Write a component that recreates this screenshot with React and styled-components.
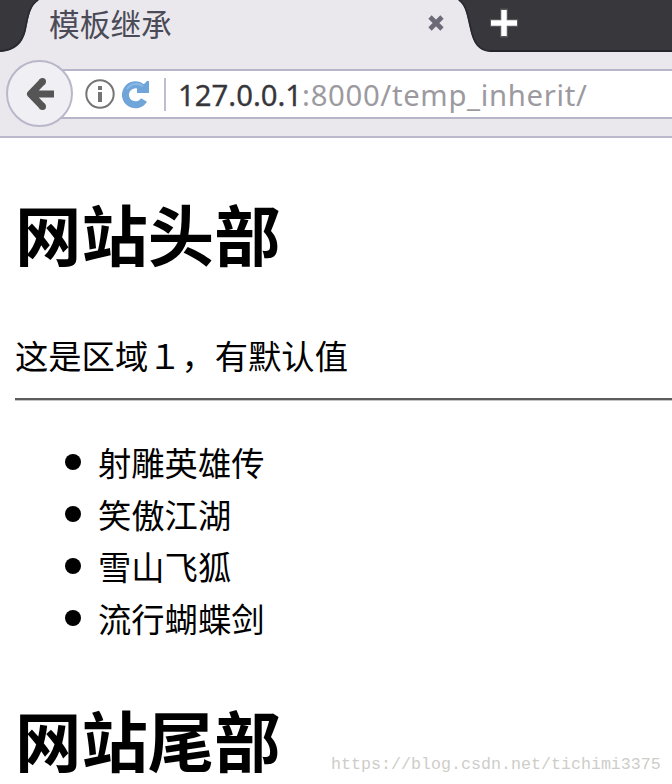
import React from "react";
import styled, { createGlobalStyle } from "styled-components";

const GlobalStyle = createGlobalStyle`
  body {
    margin: 0;
    background-color: #ffffff;
    overflow: hidden;
  }
`;
const Window = styled.div`
  position: relative;
  width: 672px;
  height: 784px;
  overflow: hidden;
  color: #000000;
  font-family: "Noto Sans CJK SC", sans-serif;
`;
const TabStrip = styled.div`
  display: flex;
  height: 52px;
  background-color: #38373c;
`;
const TabEdge = styled.svg`
  flex: none;
  display: block;
  height: 52px;
`;
const Tab = styled.div`
  display: flex;
  justify-content: space-between;
  width: 417px;
  box-sizing: border-box;
  padding: 0 13px 0 8px;
  background-color: #eae8ed;
`;
const TabTitle = styled.span`
  font-size: 30.7px;
  line-height: 46px;
  color: #4b4a57;
`;
const CloseIcon = styled.svg`
  margin-top: 14px;
`;
const NewTab = styled.div`
  flex: 1;
  padding: 8px 0 0 0;
  box-sizing: border-box;
  box-shadow: inset 0 -2px 0 #25252b;
`;
const Toolbar = styled.div`
  display: flex;
  height: 86px;
  box-sizing: border-box;
  padding: 8px 0 0 6px;
  background-color: #eae8ed;
  border-bottom: 2px solid #bdb9cc;
`;
const BackButton = styled.div`
  display: flex;
  align-items: center;
  justify-content: center;
  flex: none;
  width: 67px;
  height: 67px;
  box-sizing: border-box;
  border: 2px solid #bbb7ca;
  border-radius: 50%;
  background-color: #f0eff4;
  z-index: 1;
`;
const AddressBar = styled.div`
  display: flex;
  align-items: center;
  flex: 1;
  height: 50px;
  box-sizing: border-box;
  margin: 9px 0 0 -20px;
  padding-left: 32px;
  border-top: 2px solid #b9b5c8;
  border-bottom: 2px solid #b9b5c8;
  background-color: #ffffff;
`;
const ReloadIcon = styled.svg`
  margin-left: 7px;
`;
const Divider = styled.div`
  width: 2px;
  height: 33px;
  margin: 0 12px 0 14px;
  background-color: #c0bdce;
`;
const Url = styled.span`
  padding-top: 3px;
  font-family: "Noto Sans", sans-serif;
  font-size: 29.3px;
  line-height: 43px;
  letter-spacing: 0.67px;
  color: #9c9a9f;
  white-space: nowrap;
`;
const Host = styled.span`
  letter-spacing: 0;
  color: #37363b;
  -webkit-text-stroke: 0.3px #37363b;
`;
const Page = styled.main`
  padding: 0 0 0 15px;
`;
const Heading = styled.h1`
  margin: 0;
  padding-top: ${(props) => props.$top}px;
  font-size: 66.4px;
  line-height: 80px;
  font-weight: 700;
`;
const Paragraph = styled.p`
  margin: 0;
  padding-top: 58px;
  font-size: 33.3px;
  line-height: 50px;
`;
const Rule = styled.div`
  height: 2px;
  margin-top: 18px;
  background-color: #5c5c5c;
  border-bottom: 1px solid #c4c4c4;
`;
const BookList = styled.ul`
  margin: 0;
  padding: 35px 0 0 50px;
  list-style: none;
`;
const Book = styled.li`
  display: flex;
  align-items: center;
  gap: 17px;
  height: 52px;
  font-size: 33.3px;
  line-height: 52px;
`;
const Bullet = styled.span`
  width: 16px;
  height: 16px;
  border-radius: 50%;
  background-color: #000000;
`;
const Watermark = styled.div`
  position: absolute;
  left: 331px;
  top: 753px;
  font-family: "Liberation Mono", monospace;
  font-size: 16.66px;
  line-height: 24px;
  color: #cdcdc9;
  white-space: nowrap;
`;

const books = ["射雕英雄传", "笑傲江湖", "雪山飞狐", "流行蝴蝶剑"];

const App = () => {
  return (
    <Window>
      <GlobalStyle />
      <TabStrip>
        <TabEdge width="41" viewBox="0 0 41 52">
          <path d="M0 52C16 51 23 43 26 30C29 15 30 6 39 0H41V52Z" fill="#eae8ed" />
          <path
            d="M0 51C15 50 22 42 25 30C28 15 29 6 38 0"
            fill="none"
            stroke="#282a33"
            strokeWidth="1.5"
          />
        </TabEdge>
        <Tab>
          <TabTitle>模板继承</TabTitle>
          <CloseIcon width="18" height="18" viewBox="0 0 18 18">
            <path d="M3 3L15 15M15 3L3 15" stroke="#6c6a77" strokeWidth="4.6" />
          </CloseIcon>
        </Tab>
        <TabEdge width="32" viewBox="0 0 32 52">
          <path d="M0 0C8 5 9 17 12 29C15 43 20 51 32 52H0Z" fill="#eae8ed" />
          <path
            d="M1 0C9 5 10 17 13 29C16 43 21 50 32 51"
            fill="none"
            stroke="#282a33"
            strokeWidth="1.5"
          />
        </TabEdge>
        <NewTab>
          <svg width="30" height="30" viewBox="0 0 30 30">
            <path d="M14 0.5V29.5M0 15H28" stroke="#57565b" strokeWidth="8" />
            <path d="M14 2V28M1 15H27" stroke="#ffffff" strokeWidth="5.5" />
          </svg>
        </NewTab>
      </TabStrip>
      <Toolbar>
        <BackButton>
          <svg width="32" height="34" viewBox="0 0 32 34">
            <path
              d="M18.5 4.5L6.5 17L18.5 29.5M8 17H30"
              fill="none"
              stroke="#555555"
              strokeWidth="7"
              strokeLinejoin="round"
            />
            <path d="M18.5 4.5V4.51M18.5 29.5V29.51" stroke="#555555" strokeWidth="7" strokeLinecap="round" />
          </svg>
        </BackButton>
        <AddressBar>
          <svg width="30" height="30" viewBox="0 0 30 30">
            <circle cx="15" cy="15" r="13.7" fill="none" stroke="#757575" strokeWidth="2" />
            <path d="M15 7V11M15 13V23" stroke="#757575" strokeWidth="4" />
          </svg>
          <ReloadIcon width="28" height="30" viewBox="0 0 28 30">
            <path
              d="M22 21A10 10 0 1 1 19 7.5"
              fill="none"
              stroke="#70a5da"
              strokeWidth="7"
            />
            <path d="M27 2V14H15V10L17 4.5L22 5L25 2Z" fill="#70a5da" />
            <path d="M5 10C9 4 16 4 21 7" fill="none" stroke="#8bb9e6" strokeWidth="2" />
          </ReloadIcon>
          <Divider />
          <Url>
            <Host>127.0.0.1</Host>:8000/temp_inherit/
          </Url>
        </AddressBar>
      </Toolbar>
      <Page>
        <Heading $top={54}>网站头部</Heading>
        <Paragraph>这是区域１，有默认值</Paragraph>
        <Rule />
        <BookList>
          {books.map((book) => (
            <Book key={book}>
              <Bullet />
              {book}
            </Book>
          ))}
        </BookList>
        <Heading $top={54}>网站尾部</Heading>
      </Page>
      <Watermark>https://blog.csdn.net/tichimi3375</Watermark>
    </Window>
  );
};

export default App;
